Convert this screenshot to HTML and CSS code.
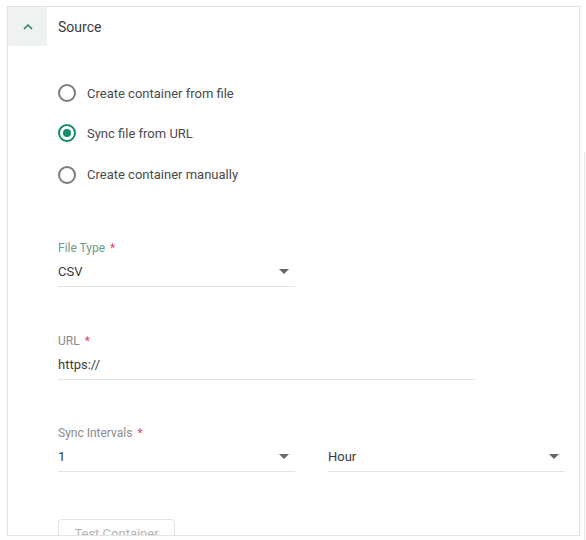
FILE: index.html
```html
<!DOCTYPE html>
<html lang="en">
<head>
    <meta charset="UTF-8">
    <meta name="viewport" content="width=device-width, initial-scale=1.0">
    <title>Source</title>
    <link rel="stylesheet" href="styles.css">
</head>
<body>

    <div class="panel">
        <div class="panel-header">
            <div class="toggle">
                <svg width="12" height="8" viewBox="0 0 12 8"><path d="M2 6 L6 2 L10 6" fill="none" stroke="#2a7b5e" stroke-width="1.5"/></svg>
            </div>
            <div class="panel-title">Source</div>
        </div>

        <div class="panel-body">
            <div class="radio-group">
                <label class="radio-row"><span class="radio"></span>Create container from file</label>
                <label class="radio-row"><span class="radio checked"></span>Sync file from URL</label>
                <label class="radio-row"><span class="radio"></span>Create container manually</label>
            </div>

            <div class="field short first">
                <div class="field-label focus">File Type <span class="req">*</span></div>
                <div class="field-value">CSV<span class="arrow"></span></div>
            </div>

            <div class="field wide">
                <div class="field-label">URL <span class="req">*</span></div>
                <div class="field-value">https://</div>
            </div>

            <div class="field-pair">
                <div class="field short">
                    <div class="field-label">Sync Intervals <span class="req">*</span></div>
                    <div class="field-value">1<span class="arrow"></span></div>
                </div>
                <div class="field short">
                    <div class="field-value">Hour<span class="arrow"></span></div>
                </div>
            </div>

            <button class="btn-test" disabled>Test Container</button>
        </div>
    </div>

    <div class="side-rule"></div>

</body>
</html>
```

FILE: styles.css
```css
body {
    font-family: Roboto, "Liberation Sans", Arial, sans-serif;
    background-color: #fff;
    color: #3c3c3c;
    margin: 0;
    padding: 6px 0 0 7px;
    display: flex;
    align-items: flex-start;
}

.panel {
    width: 571px;
    height: 528px;
    border: 1px solid #e3e3e3;
    box-shadow: 0 0 1px rgba(0, 0, 0, 0.08);
    overflow: hidden;
}

.panel-header {
    display: flex;
    align-items: center;
    height: 39px;
}

.toggle {
    width: 39px;
    height: 39px;
    background-color: #eef3f0;
    display: flex;
    justify-content: center;
    align-items: center;
}

.panel-title {
    margin-left: 11px;
    font-size: 14px;
    color: #3a3a3a;
}

.panel-body {
    padding: 27px 0 0 50px;
}

.radio-group {
    display: flex;
    flex-direction: column;
}

.radio-row {
    display: flex;
    align-items: center;
    height: 40px;
    font-size: 13px;
    color: #4a4a4a;
}

.radio-row:last-child {
    height: 41px;
    padding-top: 1px;
}

.radio {
    width: 14px;
    height: 14px;
    border: 2px solid #7b7b7b;
    border-radius: 50%;
    margin-right: 11px;
    display: flex;
    justify-content: center;
    align-items: center;
}

.radio.checked {
    border-color: #138a68;
}

.radio.checked::after {
    content: "";
    width: 8px;
    height: 8px;
    border-radius: 50%;
    background-color: #138a68;
}

.field {
    margin-top: 46px;
}

.field.first {
    margin-top: 45px;
}

.field-pair .field {
    margin-top: 45px;
}

.field.short {
    width: 237px;
}

.field.wide {
    width: 418px;
}

.field-label {
    font-size: 12px;
    line-height: 16px;
    color: #8a8a8a;
}

.field-label.focus {
    color: #6f9a86;
}

.req {
    color: #e2466c;
    margin-left: 2px;
}

.field-value {
    display: flex;
    justify-content: space-between;
    align-items: center;
    margin-top: 5px;
    padding: 0 6px 5px 0;
    height: 20px;
    font-size: 13px;
    color: #3a3a3a;
    border-bottom: 1px solid #e4e4e4;
}

.arrow {
    width: 0;
    height: 0;
    border-left: 5px solid transparent;
    border-right: 5px solid transparent;
    border-top: 5px solid #666;
}

.field-pair {
    display: flex;
    align-items: flex-end;
    gap: 33px;
}

.btn-test {
    margin-top: 47px;
    width: 117px;
    height: 28px;
    font-family: inherit;
    font-size: 13px;
    color: #b4b4b4;
    background-color: #fff;
    border: 1px solid #e2e2e2;
    border-radius: 4px;
}

.side-rule {
    width: 1px;
    height: 390px;
    margin: 146px 0 0 4px;
    background-color: #e6e6e6;
}
```
